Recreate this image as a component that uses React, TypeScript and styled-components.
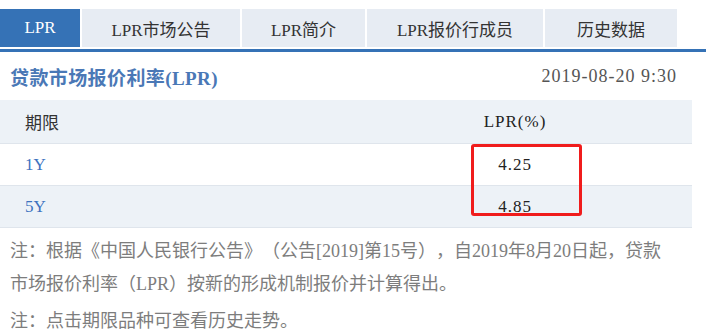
import React from "react";
import styled, { createGlobalStyle } from "styled-components";

const GlobalStyle = createGlobalStyle`
  html, body {
    margin: 0;
    padding: 0;
    background: #fff;
  }
  body {
    font-family: "Liberation Serif", "Noto Sans CJK SC", serif;
    text-spacing-trim: space-all;
  }
`;

const tabs = [
  { label: "LPR", width: 80 },
  { label: "LPR市场公告", width: 158 },
  { label: "LPR简介", width: 123 },
  { label: "LPR报价行成员", width: 176 },
  { label: "历史数据", width: 132 },
];

const rows = [
  { term: "1Y", rate: "4.25" },
  { term: "5Y", rate: "4.85" },
];

export default function App() {
  return (
    <Page>
      <GlobalStyle />
      <TabBar>
        {tabs.map((t, i) => (
          <Tab key={t.label} $width={t.width} $active={i === 0}>
            {t.label}
          </Tab>
        ))}
      </TabBar>
      <Rule />
      <TitleRow>
        <Title>贷款市场报价利率(LPR)</Title>
        <Stamp>2019-08-20 9:30</Stamp>
      </TitleRow>
      <Table>
        <HeadRow>
          <TermCell $head>期限</TermCell>
          <RateCell>LPR(%)</RateCell>
        </HeadRow>
        {rows.map((r, i) => (
          <Row key={r.term} $shaded={i % 2 === 1}>
            <TermCell>{r.term}</TermCell>
            <RateCell>{r.rate}</RateCell>
          </Row>
        ))}
        <Highlight />
      </Table>
      <Notes>
        <Note>
          注：根据《中国人民银行公告》（公告[2019]第15号），自2019年8月20日起，贷款
          <br />
          市场报价利率（LPR）按新的形成机制报价并计算得出。
        </Note>
        <Note>注：点击期限品种可查看历史走势。</Note>
      </Notes>
    </Page>
  );
}

const Page = styled.div`
  width: 706px;
  padding-top: 9px;
`;

const TabBar = styled.div`
  display: flex;
  gap: 2px;
  height: 38px;
`;

const Tab = styled.div<{ $width: number; $active?: boolean }>`
  width: ${(p) => p.$width}px;
  display: flex;
  align-items: center;
  justify-content: center;
  font-size: 17px;
  color: ${(p) => (p.$active ? "#fff" : "#333")};
  background: ${(p) => (p.$active ? "#3572b6" : "#e7ecf3")};
`;

const Rule = styled.div`
  margin-top: 2px;
  height: 3px;
  background: #3572b6;
`;

const TitleRow = styled.div`
  height: 48px;
  display: flex;
  align-items: center;
  justify-content: space-between;
  padding: 0 29px 0 10px;
`;

const Title = styled.h1`
  margin: 0;
  font-size: 19px;
  font-weight: bold;
  letter-spacing: 0.4px;
  color: #4a78b6;
`;

const Stamp = styled.span`
  font-size: 18px;
  letter-spacing: 1px;
  color: #555;
`;

const Table = styled.div`
  position: relative;
  width: 692px;
`;

const Row = styled.div<{ $shaded?: boolean }>`
  display: grid;
  grid-template-columns: 338px 1fr;
  align-items: center;
  height: 41px;
  border-bottom: 1px solid #dfe5ec;
  background: ${(p) => (p.$shaded ? "#edf2f7" : "#fff")};
`;

const HeadRow = styled(Row)`
  height: 43px;
  background: #edf2f7;
`;

const TermCell = styled.div<{ $head?: boolean }>`
  padding-left: 25px;
  font-size: 17px;
  color: ${(p) => (p.$head ? "#333" : "#3d72c0")};
`;

const RateCell = styled.div`
  text-align: center;
  font-size: 17px;
  color: #222;
  letter-spacing: 1px;
`;

const Highlight = styled.div`
  position: absolute;
  left: 471px;
  top: 44px;
  width: 111px;
  height: 72px;
  box-sizing: border-box;
  border: 3px solid #f01c1c;
  border-radius: 3px;
  pointer-events: none;
`;

const Notes = styled.div`
  padding: 7px 0 0 10px;
`;

const Note = styled.p`
  margin: 0 0 4px;
  font-size: 18px;
  line-height: 33px;
  color: #7d7d7d;
`;
